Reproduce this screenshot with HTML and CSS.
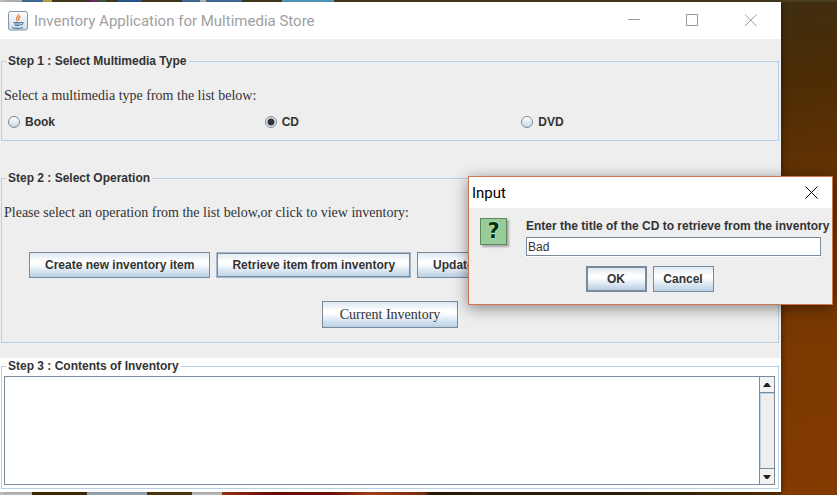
FILE: index.html
```html
<!DOCTYPE html>
<html lang="en">
<head>
<meta charset="utf-8">
<title>Inventory Application for Multimedia Store</title>
<link rel="stylesheet" href="styles.css">
</head>
<body>
<main class="window">
  <header class="titlebar">
    <svg class="app-icon" viewBox="0 0 20 20" aria-hidden="true">
      <defs><linearGradient id="tile" x2="0" y2="1"><stop offset="0" stop-color="#fff"/><stop offset="1" stop-color="#cddcea"/></linearGradient></defs>
      <rect x=".5" y=".5" width="19" height="18.5" rx="2" fill="url(#tile)" stroke="#8194a8"/>
      <path d="M10.500 3c1.500 2-3 3-2 5 .4 1 1 1.500 .5 2.500M12.500 5.500c-3 1.500-2 2.500-1.500 4" fill="none" stroke="#e48a52" stroke-width="1.400"/>
      <path d="M5.500 11.500h7.500M6 13h6.500M7 14.500h4.500M4 16.500c3 1 8 1 11 0M13 11.500c3-.5 2.500 2-.5 2.500" fill="none" stroke="#53789b" stroke-width="1.100"/>
    </svg>
    <h1 class="title">Inventory Application for Multimedia Store</h1>
    <div class="controls">
      <button class="control" aria-label="Minimize"><svg viewBox="0 0 13 13"><path d="M0 5.500h12"/></svg></button>
      <button class="control" aria-label="Maximize"><svg viewBox="0 0 13 13"><path d="M.5 .5h11v11H.5z"/></svg></button>
      <button class="control" aria-label="Close"><svg viewBox="0 0 13 13"><path d="M1 .5l11.500 11.500M12.500 .5L1 12"/></svg></button>
    </div>
  </header>

  <fieldset class="group">
    <legend>Step 1 : Select Multimedia Type</legend>
    <p class="prompt">Select a multimedia type from the list below:</p>
    <div class="choices">
      <label class="choice"><input type="radio" name="media">Book</label>
      <label class="choice"><input type="radio" name="media" checked>CD</label>
      <label class="choice"><input type="radio" name="media">DVD</label>
    </div>
  </fieldset>

  <fieldset class="group operations">
    <legend>Step 2 : Select Operation</legend>
    <p class="prompt">Please select an operation from the list below,or click to view inventory:</p>
    <div class="actions">
      <button class="button">Create new inventory item</button>
      <button class="button focused">Retrieve item from inventory</button>
      <button class="button">Update inventory item</button>
    </div>
    <div class="view">
      <button class="button serif">Current Inventory</button>
    </div>
  </fieldset>

  <section class="contents">
    <fieldset class="group results">
      <legend>Step 3 : Contents of Inventory</legend>
      <div class="scroll-pane">
        <textarea class="output" aria-label="Contents of Inventory" readonly></textarea>
        <div class="scrollbar">
          <button class="arrow" aria-label="Scroll up"><svg viewBox="0 0 8 4"><path d="M0 4L3 0h2l3 4z"/></svg></button>
          <div class="track"></div>
          <button class="arrow down" aria-label="Scroll down"><svg viewBox="0 0 8 4"><path d="M0 0h8L5 4H3z"/></svg></button>
        </div>
      </div>
    </fieldset>
  </section>
</main>

<div class="dialog" role="dialog" aria-labelledby="dialog-title">
  <header class="dialog-bar">
    <h2 class="dialog-title" id="dialog-title">Input</h2>
    <button class="control dark" aria-label="Close dialog"><svg viewBox="0 0 13 13"><path d="M.5 .5l12 12M12.500 .5l-12 12"/></svg></button>
  </header>
  <div class="dialog-body">
    <div class="question" aria-hidden="true">?</div>
    <div class="entry">
      <label for="item-title">Enter the title of the CD to retrieve from the inventory</label>
      <input class="field" id="item-title" type="text" value="Bad">
    </div>
  </div>
  <div class="dialog-actions">
    <button class="button default">OK</button>
    <button class="button">Cancel</button>
  </div>
</div>
</body>
</html>
```
FILE: styles.css
```css
* { box-sizing: border-box; }

body {
  margin: 0;
  min-height: 100vh;
  display: flex;
  padding: 2px 56px 3px 0;
  font: bold 12px/15px "Liberation Sans", Arial, sans-serif;
  color: #333;
  background:
    linear-gradient(90deg, #ccc 22px, #4a76a8 22px 43px, #d8b84a 43px 52px, #4a3f20 52px 90px, #7a3070 90px 98px, #3a6a3a 98px 106px, #4a3f20 106px 118px, #2f62a0 118px 142px, #4a3f20 142px 182px, #4a76a8 182px 200px, #ccc 200px 206px, #4a76a8 206px 242px, #4a3f20 242px 282px, #5aaad8 282px 334px, #4a3f20 334px) top / 100% 2px no-repeat,
    linear-gradient(90deg, #ccc 32px, #4a2c08 32px 87px, #a8b8c4 87px 147px, #5a3c10 147px 192px, #ccc 192px 222px, #b03818 222px, #7a0c08 270px, #7a1008 330px, #b84818 370px, #8a3010 424px, #2c1c04 430px, #33240a 640px, #5a3000 780px, #803c00 782px) bottom / 100% 3px no-repeat,
    linear-gradient(170deg, #3a3018 0%, #3f2e10 22%, #4c2c05 34%, #753700 62%, #843b00 100%);
}

button, input, textarea { font: inherit; color: inherit; margin: 0; }

.window {
  flex: 1;
  min-width: 0;
  display: flex;
  flex-direction: column;
  background: #eee;
  box-shadow: 1px 0 6px rgba(0, 0, 0, .4);
}

.titlebar {
  display: flex;
  align-items: center;
  height: 37px;
  padding-left: 8px;
  background: #fff;
}

.app-icon { width: 20px; height: 20px; }

.title, .dialog-title {
  margin: 0;
  font: 15px/20px Roboto, "Noto Sans", sans-serif;
}

.title { padding-left: 6px; color: #a0a0a0; white-space: nowrap; }

.controls { display: flex; gap: 45px; margin-left: auto; padding-right: 24px; }

.control {
  display: flex;
  padding: 0;
  border: 0;
  background: none;
  color: #999;
}

.control svg { width: 13px; height: 13px; fill: none; stroke: currentColor; }
.control.dark { color: #000; }

.group {
  min-width: 0;
  margin: 14px 2px 0 1px;
  padding: 0 2px;
  border: 1px solid #b8cfe5;
}

legend { margin-left: 2px; padding: 0 2px; line-height: 16px; }

.prompt {
  margin: 18px 0 0;
  font: 14px/18px "Liberation Serif", "Times New Roman", serif;
}

.choices { display: grid; grid-template-columns: repeat(3, 1fr); padding: 8px 0 9px 4px; margin-right: -2px; }
.choice { display: flex; align-items: center; gap: 5px; height: 18px; }

.choice input {
  appearance: none;
  width: 12px;
  height: 12px;
  border: 1px solid #7a8a99;
  border-radius: 50%;
  background: linear-gradient(#fff, #c8d8e8);
}

.choice input:checked { background: radial-gradient(circle, #333 3px, #dfe8f0 4px); }

.operations { margin-top: 29px; }

.actions { display: flex; gap: 6px; padding: 30px 0 0 25px; }
.view { display: flex; justify-content: center; padding: 23px 0 14px; }

.button {
  height: 26px;
  padding: 0 15px;
  border: 1px solid #7a8a99;
  background: linear-gradient(#dde8f3, #fff 35%, #fff 45%, #b8cfe5);
  white-space: nowrap;
}

.focused { box-shadow: inset 0 0 0 1px #7a8a99; border-color: #a3b8cc; }
.serif { height: 27px; padding: 0 17px; font: 14px/18px "Liberation Serif", "Times New Roman", serif; }
.default { border-width: 2px; }

.contents { flex: 1; display: flex; margin-top: 15px; background: #fff; }

.results {
  flex: 1;
  display: flex;
  flex-direction: column;
  margin: 0 2px 3px 1px;
  padding: 2px 3px 3px 2px;
}

.scroll-pane { flex: 1; display: flex; min-height: 100px; border: 1px solid #7a8a99; }

.output { flex: 1; min-width: 0; padding: 2px; border: 0; outline: 0; resize: none; background: #fff; }

.scrollbar { display: flex; flex-direction: column; width: 15px; border-left: 1px solid #7a8a99; }

.arrow {
  display: flex;
  align-items: center;
  justify-content: center;
  height: 16px;
  padding: 0;
  border: 0;
  border-bottom: 1px solid #7a8a99;
  background: #f2f2f2;
}

.arrow.down { border-top: 1px solid #7a8a99; border-bottom: 0; }
.arrow svg { width: 8px; height: 4px; fill: #222; }
.track { flex: 1; border: solid #b8cfe5; border-width: 1px 0 0 1px; background: #eee; }

.dialog {
  position: absolute;
  top: 176px;
  right: 4px;
  width: 365px;
  border: 1px solid #cf7650;
  background: #eee;
  box-shadow: 0 3px 14px rgba(0, 0, 0, .45);
}

.dialog-bar {
  display: flex;
  align-items: center;
  justify-content: space-between;
  height: 31px;
  padding: 0 14px 0 3px;
  background: #fff;
}

.dialog-title { color: #000; }

.dialog-body { display: flex; gap: 19px; padding: 10px 11px 0 11px; }

.question {
  flex: none;
  width: 27px;
  height: 27px;
  border: 1px solid #5b8a5e;
  background: #99cc99;
  box-shadow: 2px 2px 2px rgba(0, 0, 0, .3);
  color: #031;
  font: 900 21px/25px "DejaVu Sans", sans-serif;
  text-align: center;
  text-shadow: 0 0 2px #d6ffd6, 0 0 1px #d6ffd6;
}

.entry {
  flex: 1;
  min-width: 0;
  display: flex;
  flex-direction: column;
  gap: 3px;
  padding-top: 1px;
  white-space: nowrap;
}

.field {
  width: 100%;
  height: 19px;
  padding: 0 1px;
  border: 1px solid #7a8a99;
  border-radius: 0;
  outline: 0;
  background: #fff;
  box-shadow: 0 1px #fff;
  font-weight: normal;
}

.dialog-actions { display: flex; justify-content: center; gap: 6px; padding: 10px 2px 12px 0; }
.dialog-actions .button { width: 61px; padding: 0; }
```
